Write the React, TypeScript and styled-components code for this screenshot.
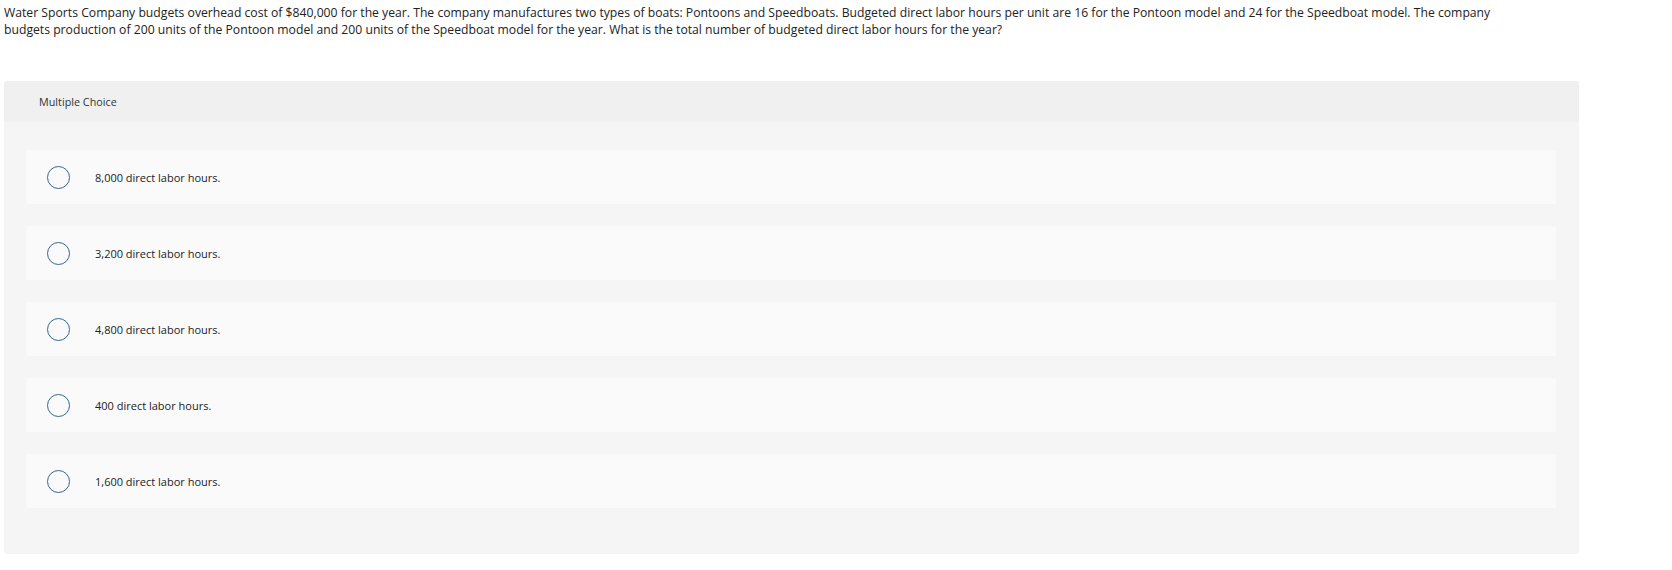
import React from "react";
import styled, { createGlobalStyle } from "styled-components";

const GlobalStyle = createGlobalStyle`
  body {
    margin: 0;
    background: #ffffff;
    font-family: "Open Sans", "Liberation Sans", sans-serif;
    color: #1a1a1a;
  }
`;

const Page = styled.div`
  padding: 4px 4px 0 4px;
  width: 1575px;
`;

const Question = styled.p`
  margin: 0;
  width: 1520px;
  font-size: 12.2px;
  line-height: 17px;
  color: #222;
`;

const Panel = styled.section`
  margin-top: 43px;
  background: #f5f5f5;
  border-radius: 3px;
  overflow: hidden;
  padding-bottom: 46px;
`;

const PanelHeader = styled.header`
  height: 41px;
  background: #f0f0f0;
  display: flex;
  align-items: center;
  padding-left: 35px;
  font-size: 10.8px;
  color: #333;
`;

const Options = styled.div`
  display: flex;
  flex-direction: column;
  gap: 22px;
  padding: 28px 23px 0 22px;
`;

const Option = styled.label`
  display: flex;
  align-items: center;
  height: 54px;
  background: #fafafa;
  border-radius: 2px;
  padding-left: 21px;
  font-size: 11px;
  color: #222;
  cursor: pointer;
`;

const Radio = styled.span`
  box-sizing: border-box;
  width: 23px;
  height: 23px;
  border: 1.5px solid #356494;
  border-radius: 50%;
  flex-shrink: 0;
  margin-right: 25px;
`;

const choices = [
  "8,000 direct labor hours.",
  "3,200 direct labor hours.",
  "4,800 direct labor hours.",
  "400 direct labor hours.",
  "1,600 direct labor hours.",
];

export default function App() {
  return (
    <>
      <GlobalStyle />
      <Page>
        <Question>
          Water Sports Company budgets overhead cost of $840,000 for the year. The company
          manufactures two types of boats: Pontoons and Speedboats. Budgeted direct labor hours
          per unit are 16 for the Pontoon model and 24 for the Speedboat model. The company
          budgets production of 200 units of the Pontoon model and 200 units of the Speedboat
          model for the year. What is the total number of budgeted direct labor hours for the year?
        </Question>
        <Panel>
          <PanelHeader>Multiple Choice</PanelHeader>
          <Options>
            {choices.map((c) => (
              <Option key={c}>
                <Radio />
                {c}
              </Option>
            ))}
          </Options>
        </Panel>
      </Page>
    </>
  );
}
